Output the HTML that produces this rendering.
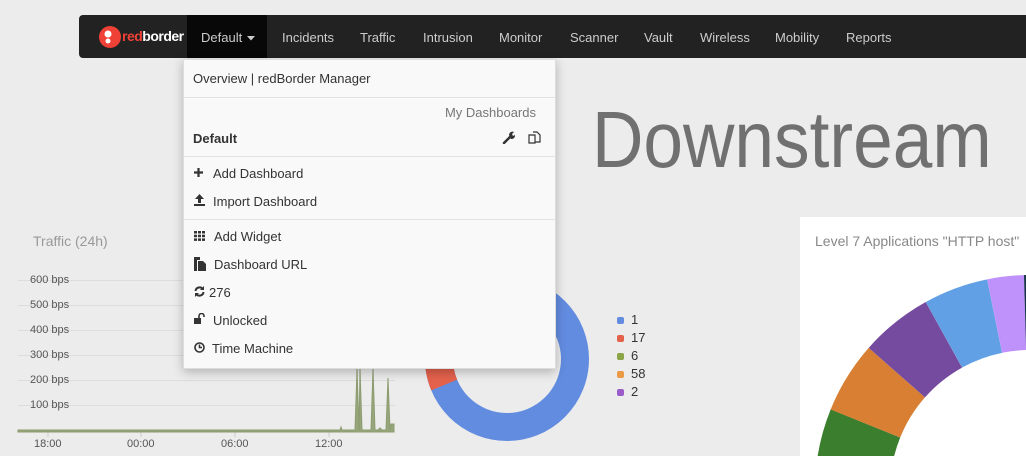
<!DOCTYPE html>
<html><head><meta charset="utf-8"><style>
*{margin:0;padding:0;box-sizing:border-box}
html,body{width:1026px;height:456px;overflow:hidden}
body{background:#ececec;font-family:"Liberation Sans",sans-serif;position:relative}
.nav{position:absolute;left:79px;top:15px;width:947px;height:43px;background:#222;border-radius:4px 0 0 4px}
.nav span{position:absolute;top:15px;font-size:13px;color:#ccc}
.act{position:absolute;left:108px;top:0;width:80px;height:43px;background:#080808}
.menu{position:absolute;left:183px;top:59px;width:373px;height:310px;background:#f9f9f9;box-shadow:0 3px 10px rgba(0,0,0,.25);border:1px solid #ddd;font-size:13px;color:#333}
.menu div,.menu svg{position:absolute}
.hr{left:0;width:100%;height:1px;background:#e2e2e2}
.t{left:29px}
.lbl{position:absolute;font-size:11px;color:#555}
</style></head><body>
<div style="position:absolute;left:800px;top:217px;width:226px;height:239px;background:#fff"></div>
<div style="position:absolute;left:815px;top:233px;font-size:14px;color:#888">Level 7 Applications "HTTP host"</div>
<svg style="position:absolute;left:0;top:0" width="1026" height="456">
<g fill="none" stroke-width="75">
<circle cx="1030" cy="490" r="177.5" stroke="#3b7f2e" stroke-dasharray="161.1 2000" transform="rotate(150 1030 490)"/>
<circle cx="1030" cy="490" r="177.5" stroke="#d97f34" stroke-dasharray="60.1 2000" transform="rotate(202 1030 490)"/>
<circle cx="1030" cy="490" r="177.5" stroke="#744b9e" stroke-dasharray="60.7 2000" transform="rotate(221.4 1030 490)"/>
<circle cx="1030" cy="490" r="177.5" stroke="#62a0e6" stroke-dasharray="54.2 2000" transform="rotate(241 1030 490)"/>
<circle cx="1030" cy="490" r="177.5" stroke="#bf91fb" stroke-dasharray="30.7 2000" transform="rotate(258.5 1030 490)"/>
<circle cx="1030" cy="490" r="177.5" stroke="#173446" stroke-dasharray="6 2000" transform="rotate(268.4 1030 490)"/>
<circle cx="507" cy="359" r="68" stroke-width="28" stroke="#628ce0"/>
<circle cx="507" cy="359" r="68" stroke-width="28" stroke="#e4624c" stroke-dasharray="60 1000" transform="rotate(157.5 507 359)"/>
</g>
<g stroke="#ddd" stroke-width="1">
<line x1="18" y1="280.5" x2="395" y2="280.5"/><line x1="18" y1="305.5" x2="395" y2="305.5"/><line x1="18" y1="330.5" x2="395" y2="330.5"/><line x1="18" y1="355.5" x2="395" y2="355.5"/><line x1="18" y1="380.5" x2="395" y2="380.5"/><line x1="18" y1="405.5" x2="395" y2="405.5"/>
</g>
<g stroke="#ccc"><line x1="48" y1="432" x2="48" y2="437"/><line x1="141" y1="432" x2="141" y2="437"/><line x1="235" y1="432" x2="235" y2="437"/><line x1="329" y1="432" x2="329" y2="437"/></g>
<polygon fill="#96a67a" stroke="#8c9c70" points="18,432 18,430 340,430 341,427 342,430 355,430 357,369 359,430 360,369 362,430 371,430 373,369 375,430 378,430 380,428 382,430 386,430 388,378 390,430 391,424 394,424 394,432"/>
</svg>
<div class="lbl" style="left:30px;top:274px">600 bps</div>
<div class="lbl" style="left:30px;top:299px">500 bps</div>
<div class="lbl" style="left:30px;top:324px">400 bps</div>
<div class="lbl" style="left:30px;top:349px">300 bps</div>
<div class="lbl" style="left:30px;top:374px">200 bps</div>
<div class="lbl" style="left:30px;top:399px">100 bps</div>
<div class="lbl" style="left:34px;top:438px">18:00</div>
<div class="lbl" style="left:127px;top:438px">00:00</div>
<div class="lbl" style="left:221px;top:438px">06:00</div>
<div class="lbl" style="left:315px;top:438px">12:00</div>
<div style="position:absolute;left:33px;top:233px;font-size:14px;color:#999">Traffic (24h)</div>
<div style="position:absolute;left:592px;top:94px;font-size:80px;color:#707070;transform:scaleX(0.89);transform-origin:0 0;white-space:nowrap">Downstream</div>
<div style="position:absolute;left:617px;top:311px;font-size:13px;color:#333;line-height:18px">
<div><span style="display:inline-block;width:7px;height:7px;border-radius:2px;background:#628ce0;margin-right:7px"></span>1</div>
<div><span style="display:inline-block;width:7px;height:7px;border-radius:2px;background:#e4624c;margin-right:7px"></span>17</div>
<div><span style="display:inline-block;width:7px;height:7px;border-radius:2px;background:#8ba446;margin-right:7px"></span>6</div>
<div><span style="display:inline-block;width:7px;height:7px;border-radius:2px;background:#ea9a45;margin-right:7px"></span>58</div>
<div><span style="display:inline-block;width:7px;height:7px;border-radius:2px;background:#9a5cc8;margin-right:7px"></span>2</div>
</div>
<div class="nav">
<div class="act"></div>
<svg style="position:absolute;left:20px;top:11px" width="22" height="22"><circle cx="11" cy="11" r="11" fill="#ef4136"/><circle cx="9" cy="8" r="3.5" fill="#fff"/><circle cx="9" cy="15" r="2.5" fill="#fff"/></svg>
<span style="left:43px;top:13px;font-size:14px;font-weight:bold;color:#fff;letter-spacing:-.5px"><b style="color:#ef4136">red</b>border</span>
<span style="left:122px">Default</span>
<svg style="position:absolute;left:168px;top:21px" width="8" height="5"><path d="M0 0H8L4 4.5Z" fill="#ccc"/></svg>
<span style="left:203px">Incidents</span>
<span style="left:281px">Traffic</span>
<span style="left:344px">Intrusion</span>
<span style="left:420px">Monitor</span>
<span style="left:491px">Scanner</span>
<span style="left:565px">Vault</span>
<span style="left:621px">Wireless</span>
<span style="left:696px">Mobility</span>
<span style="left:767px">Reports</span>
</div>
<div class="menu">
<div style="left:9px;top:11px">Overview | redBorder Manager</div>
<div class="hr" style="top:37px"></div>
<div style="right:19px;top:45px;color:#777">My Dashboards</div>
<div style="left:9px;top:71px;font-weight:bold">Default</div>
<svg style="left:318px;top:71px" width="13" height="13"><path d="M2 12L8 6" stroke="#333" stroke-width="2.5" stroke-linecap="round"/><path d="M7 4a3.5 3.5 0 0 1 5-3l-2 2 1 2 2-1a3.5 3.5 0 0 1-4 4z" fill="#333"/></svg>
<svg style="left:344px;top:71px" width="13" height="13" fill="none" stroke="#333" stroke-width="1.2"><path d="M1 4h6v8H1z"/><path d="M5 1h4l3 3v7H7"/></svg>
<div class="hr" style="top:96px"></div>
<svg style="left:10px;top:108px" width="9" height="9"><path d="M4.5 0v9M0 4.5h9" stroke="#333" stroke-width="2.2"/></svg><div class="t" style="top:106px">Add Dashboard</div>
<svg style="left:10px;top:134px" width="11" height="12" fill="#333"><path d="M5.5 0L10 5H7v4H4V5H1z"/><rect x="0" y="10" width="11" height="2"/></svg><div class="t" style="top:134px">Import Dashboard</div>
<div class="hr" style="top:159px"></div>
<svg style="left:10px;top:171px" width="11" height="10" fill="#333"><rect x="0" y="0" width="3" height="2.5"/><rect x="4" y="0" width="3" height="2.5"/><rect x="8" y="0" width="3" height="2.5"/><rect x="0" y="3.7" width="3" height="2.5"/><rect x="4" y="3.7" width="3" height="2.5"/><rect x="8" y="3.7" width="3" height="2.5"/><rect x="0" y="7.4" width="3" height="2.5"/><rect x="4" y="7.4" width="3" height="2.5"/><rect x="8" y="7.4" width="3" height="2.5"/></svg><div class="t" style="left:30px;top:169px">Add Widget</div>
<svg style="left:10px;top:197px" width="12" height="14" fill="#333"><path d="M0 0h6v3H3v11H0z"/><path d="M4 4h5l3 3v7H4z"/></svg><div class="t" style="left:30px;top:197px">Dashboard URL</div>
<svg style="left:10px;top:226px" width="11" height="11" fill="none" stroke="#333" stroke-width="2"><path d="M1.5 5a4 4 0 0 1 7.5-1.5M9.5 6a4 4 0 0 1-7.5 1.5"/><path d="M10 0v4H6z M1 11V7h4z" fill="#333" stroke="none"/></svg><div style="left:25px;top:225px">276</div>
<svg style="left:10px;top:253px" width="12" height="11"><rect x="0" y="5" width="7" height="6" fill="#333"/><path d="M5 5V3a2.5 2.5 0 0 1 5 0v1" fill="none" stroke="#333" stroke-width="1.6"/></svg><div class="t" style="top:253px">Unlocked</div>
<svg style="left:10px;top:282px" width="11" height="11" fill="none" stroke="#333" stroke-width="1.6"><circle cx="5.5" cy="5.5" r="4.5"/><path d="M5.5 2.5v3h2.5"/></svg><div class="t" style="left:28px;top:281px">Time Machine</div>
</div>
</body></html>
